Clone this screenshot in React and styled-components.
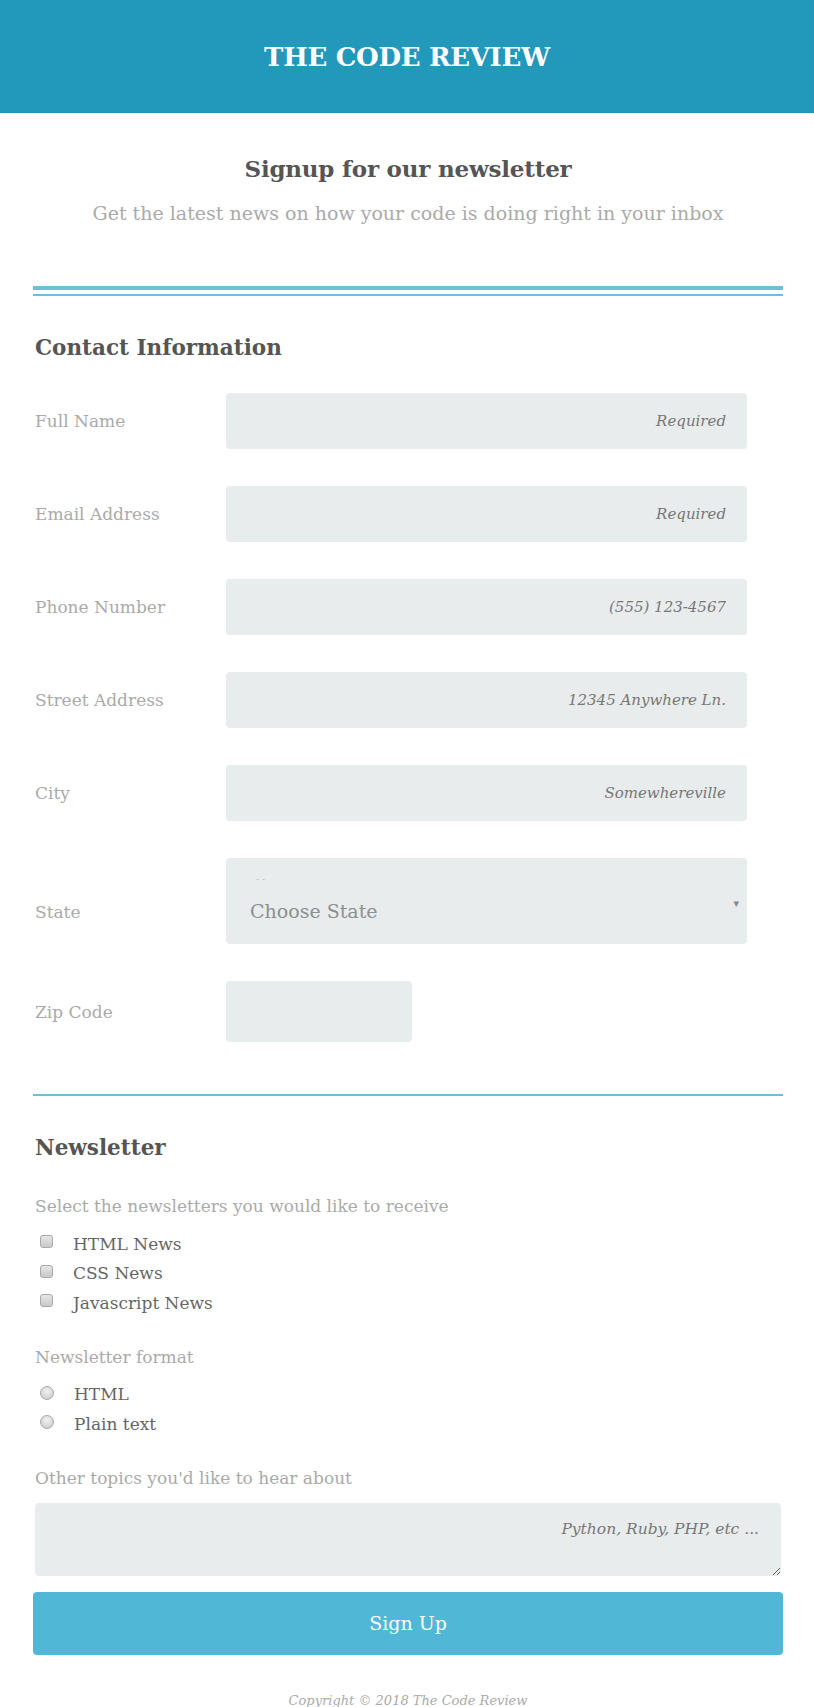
import styled, { createGlobalStyle } from "styled-components";

const GlobalStyle = createGlobalStyle`
  html, body {
    margin: 0;
    padding: 0;
    background: #ffffff;
  }
  body {
    font-family: "DejaVu Serif", "Liberation Serif", serif;
    color: #555555;
  }
  * {
    box-sizing: border-box;
  }
`;

const contactFields = [
  { label: "Full Name", placeholder: "Required" },
  { label: "Email Address", placeholder: "Required" },
  { label: "Phone Number", placeholder: "(555) 123-4567" },
  { label: "Street Address", placeholder: "12345 Anywhere Ln." },
  { label: "City", placeholder: "Somewhereville" },
];

const newsletters = ["HTML News", "CSS News", "Javascript News"];
const formats = ["HTML", "Plain text"];

export default function App() {
  return (
    <>
      <GlobalStyle />
      <StyledHeader>
        <StyledBrand>THE CODE REVIEW</StyledBrand>
      </StyledHeader>

      <StyledMain>
        <StyledIntro>
          <StyledTitle>Signup for our newsletter</StyledTitle>
          <StyledSubtitle>
            Get the latest news on how your code is doing right in your inbox
          </StyledSubtitle>
        </StyledIntro>

        <StyledDoubleRule />

        <StyledSectionTitle>Contact Information</StyledSectionTitle>

        <StyledFieldGrid>
          {contactFields.map((field) => (
            <StyledFieldRow key={field.label}>
              <StyledLabel>{field.label}</StyledLabel>
              <StyledInput placeholder={field.placeholder} />
            </StyledFieldRow>
          ))}

          <StyledFieldRow>
            <StyledLabel $shift={22}>State</StyledLabel>
            <StyledSelect>
              <StyledSelectDash>- -</StyledSelectDash>
              <span>Choose State</span>
              <StyledCaret>▾</StyledCaret>
            </StyledSelect>
          </StyledFieldRow>

          <StyledFieldRow>
            <StyledLabel>Zip Code</StyledLabel>
            <StyledZip />
          </StyledFieldRow>
        </StyledFieldGrid>

        <StyledRule />

        <StyledSectionTitle>Newsletter</StyledSectionTitle>

        <StyledPrompt>Select the newsletters you would like to receive</StyledPrompt>
        <StyledOptionList>
          {newsletters.map((item) => (
            <StyledOption key={item}>
              <StyledCheckbox />
              {item}
            </StyledOption>
          ))}
        </StyledOptionList>

        <StyledPrompt>Newsletter format</StyledPrompt>
        <StyledOptionList>
          {formats.map((item) => (
            <StyledOption key={item}>
              <StyledRadio />
              {item}
            </StyledOption>
          ))}
        </StyledOptionList>

        <StyledPrompt>Other topics you'd like to hear about</StyledPrompt>
        <StyledTextArea placeholder="Python, Ruby, PHP, etc ..." />

        <StyledButton>Sign Up</StyledButton>

        <StyledFooter>Copyright © 2018 The Code Review</StyledFooter>
      </StyledMain>
    </>
  );
}

const StyledHeader = styled.header`
  height: 113px;
  background-color: #2298ba;
  display: flex;
  justify-content: center;
  align-items: center;
`;

const StyledBrand = styled.h1`
  margin: 0;
  color: #ffffff;
  font-size: 26px;
  font-weight: 700;
  letter-spacing: -0.3px;
`;

const StyledMain = styled.main`
  padding: 0 31px 0 33px;
  display: flex;
  flex-direction: column;
`;

const StyledIntro = styled.div`
  margin-top: 41px;
  text-align: center;
`;

const StyledTitle = styled.h2`
  margin: 0;
  font-size: 23px;
  line-height: 30px;
  font-weight: 700;
  color: #555555;
  letter-spacing: -0.2px;
`;

const StyledSubtitle = styled.p`
  margin: 17px 0 0;
  font-size: 19px;
  line-height: 24px;
  color: #aaaaaa;
`;

const StyledDoubleRule = styled.div`
  margin-top: 61px;
  height: 10px;
  border-top: 4px solid #6bc0d9;
  border-bottom: 2px solid #6bc0d9;
`;

const StyledSectionTitle = styled.h3`
  margin: 37px 0 0;
  padding-left: 2px;
  font-size: 21.5px;
  line-height: 30px;
  font-weight: 700;
  color: #555555;
`;

const StyledFieldGrid = styled.div`
  margin-top: 30px;
  display: flex;
  flex-direction: column;
  gap: 37px;
`;

const StyledFieldRow = styled.div`
  display: grid;
  grid-template-columns: 193px 521px;
  align-items: center;
`;

const StyledLabel = styled.label`
  padding-left: 2px;
  padding-top: ${(props) => props.$shift || 0}px;
  font-size: 17px;
  color: #aaaaaa;
`;

const StyledInput = styled.input`
  height: 56px;
  width: 100%;
  border: none;
  border-radius: 4px;
  background-color: #e8ecec;
  padding: 0 21px;
  text-align: right;
  font-family: inherit;
  font-size: 15px;
  outline: none;
  &::placeholder {
    color: #777777;
    font-style: italic;
  }
`;

const StyledSelect = styled.div`
  position: relative;
  height: 86px;
  border-radius: 4px;
  background-color: #e8ecec;
  padding: 20px 24px 0;
  display: flex;
  align-items: center;
  font-size: 19px;
  color: #8a9092;
`;

const StyledSelectDash = styled.span`
  position: absolute;
  top: 16px;
  left: 30px;
  font-size: 9px;
  color: #b8bcbd;
`;

const StyledCaret = styled.span`
  position: absolute;
  right: 8px;
  top: 50%;
  transform: translateY(-30%);
  font-size: 11px;
  color: #888888;
`;

const StyledZip = styled.div`
  width: 186px;
  height: 61px;
  border-radius: 4px;
  background-color: #e8ecec;
`;

const StyledRule = styled.div`
  margin-top: 52px;
  height: 2px;
  background-color: #6bc0d9;
`;

const StyledPrompt = styled.p`
  margin: 32px 0 0;
  padding-left: 2px;
  font-size: 17px;
  line-height: 22px;
  color: #aaaaaa;
  & + div {
    margin-top: 12px;
  }
  div + & {
    margin-top: 28px;
  }
`;

const StyledOptionList = styled.div`
  display: flex;
  flex-direction: column;
`;

const StyledOption = styled.label`
  display: flex;
  align-items: center;
  height: 29.5px;
  padding-left: 7px;
  font-size: 17px;
  color: #666666;
`;

const StyledCheckbox = styled.span`
  width: 13px;
  height: 13px;
  margin-right: 20px;
  margin-top: -4px;
  border: 1px solid #a9a9a9;
  border-radius: 3px;
  background: linear-gradient(#e6e6e6, #c9c9c9);
`;

const StyledRadio = styled.span`
  width: 14px;
  height: 14px;
  margin-right: 20px;
  margin-top: -3px;
  border: 1px solid #aaaaaa;
  border-radius: 50%;
  background: radial-gradient(circle at 50% 35%, #f2f2f2, #c5c5c5);
`;

const StyledTextArea = styled.textarea`
  margin: 14px 2px 0;
  height: 73px;
  border: none;
  border-radius: 4px;
  background-color: #e8ecec;
  padding: 17px 22px 0;
  text-align: right;
  font-family: inherit;
  font-size: 15.5px;
  resize: vertical;
  outline: none;
  &::placeholder {
    color: #777777;
    font-style: italic;
  }
`;

const StyledButton = styled.button`
  margin-top: 16px;
  height: 63px;
  border: none;
  border-radius: 4px;
  background-color: #50b8d6;
  color: #ffffff;
  font-family: inherit;
  font-size: 19px;
`;

const StyledFooter = styled.footer`
  margin-top: 37px;
  text-align: center;
  font-size: 13px;
  line-height: 18px;
  font-style: italic;
  color: #aaaaaa;
  padding-bottom: 10px;
`;
